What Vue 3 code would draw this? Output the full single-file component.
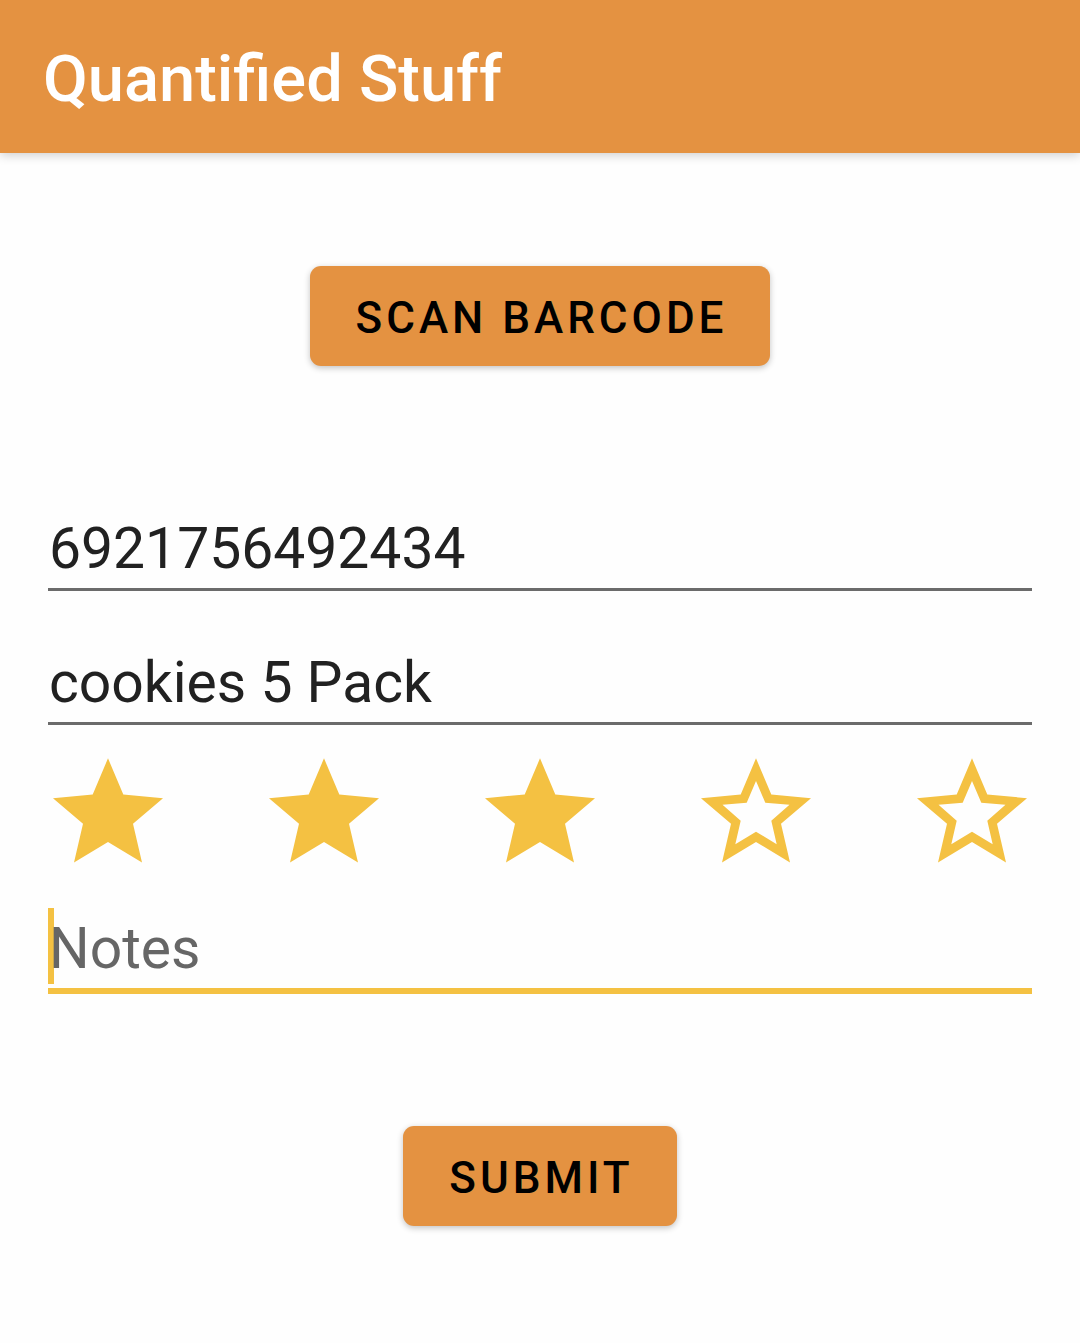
<script setup>
import { ref } from 'vue'

const barcode = ref('6921756492434')
const name = ref('cookies 5 Pack')
const notes = ref('')
const rating = ref(3)
</script>

<template>
  <div class="screen">
    <header class="app-bar">
      <h1 class="title">Quantified Stuff</h1>
    </header>

    <form class="form" @submit.prevent>
      <button type="button" class="button">SCAN BARCODE</button>

      <div class="fields">
        <div class="field">
          <input v-model="barcode" type="text" inputmode="numeric" aria-label="Barcode" />
        </div>
        <div class="field">
          <input v-model="name" type="text" aria-label="Name" />
        </div>

        <fieldset class="rating" aria-label="Rating">
          <label v-for="n in 5" :key="n" class="star">
            <input v-model="rating" type="radio" name="rating" :value="n" :aria-label="`${n} of 5`" />
            <svg viewBox="0 0 120 120" aria-hidden="true">
              <path
                fill-rule="evenodd"
                :d="
                  'M60 8.3 75.3 44.5 115 48.2 85 73.7 94 112.5 60 92 26 112.5 35 73.7 5 48.2 44.7 44.5Z' +
                  (n > rating
                    ? 'M60 31 50.7 52.7 26.5 54.7 44.7 70.7 39.3 94.3 60 81.7 80.7 94.3 75.3 70.7 93.5 54.7 69.3 52.7Z'
                    : '')
                "
              />
            </svg>
          </label>
        </fieldset>

        <div class="field active">
          <input v-model="notes" type="text" placeholder="Notes" aria-label="Notes" />
        </div>
      </div>

      <button type="submit" class="button">SUBMIT</button>
    </form>
  </div>
</template>

<style>
body {
  margin: 0;
  background: #fefefe;
}
</style>

<style scoped>
.screen {
  font-family: Roboto, 'Liberation Sans', sans-serif;
  color: #212121;
}

.app-bar {
  display: flex;
  align-items: center;
  padding: 41px 43px 36px;
  background: #e49241;
  box-shadow: 0 2px 10px rgba(0, 0, 0, 0.2);
}

.title {
  margin: 0;
  font-size: 65px;
  line-height: 76px;
  font-weight: 500;
  color: #fff;
}

.form {
  display: flex;
  flex-direction: column;
  align-items: center;
  padding: 113px 48px;
}

.button {
  height: 100px;
  padding: 4px 43px 0 46px;
  border: 0;
  border-radius: 11px;
  background: #e49241;
  box-shadow: 0 2px 6px rgba(0, 0, 0, 0.24);
  font-family: inherit;
  font-size: 44px;
  font-weight: 500;
  letter-spacing: 4px;
  color: #000;
}

.fields {
  align-self: stretch;
  margin: 142px 0 132px;
}

.field {
  position: relative;
  height: 80px;
  border-bottom: 3px solid #6b6b6b;
}

.field + .field {
  margin-top: 51px;
}

.field input {
  position: relative;
  display: block;
  box-sizing: border-box;
  width: 100%;
  height: 80px;
  padding: 0 0 0 1px;
  border: 0;
  outline: 0;
  background: transparent;
  font-family: inherit;
  font-size: 57px;
  color: #212121;
}

.field input::placeholder {
  color: #666;
  opacity: 1;
}

.field.active {
  border-bottom: 6px solid #f4c142;
}

.field.active::before {
  content: '';
  position: absolute;
  left: 0;
  top: 0;
  width: 6px;
  height: 76px;
  background: #f4c142;
}

.rating {
  display: flex;
  justify-content: space-between;
  margin: 25px 0 38px;
  padding: 0;
  border: 0;
}

.star {
  position: relative;
  width: 120px;
  height: 120px;
}

.star input {
  position: absolute;
  inset: 0;
  width: 100%;
  height: 100%;
  margin: 0;
  opacity: 0;
}

.star svg {
  display: block;
  width: 100%;
  height: 100%;
  fill: #f4c142;
}
</style>
